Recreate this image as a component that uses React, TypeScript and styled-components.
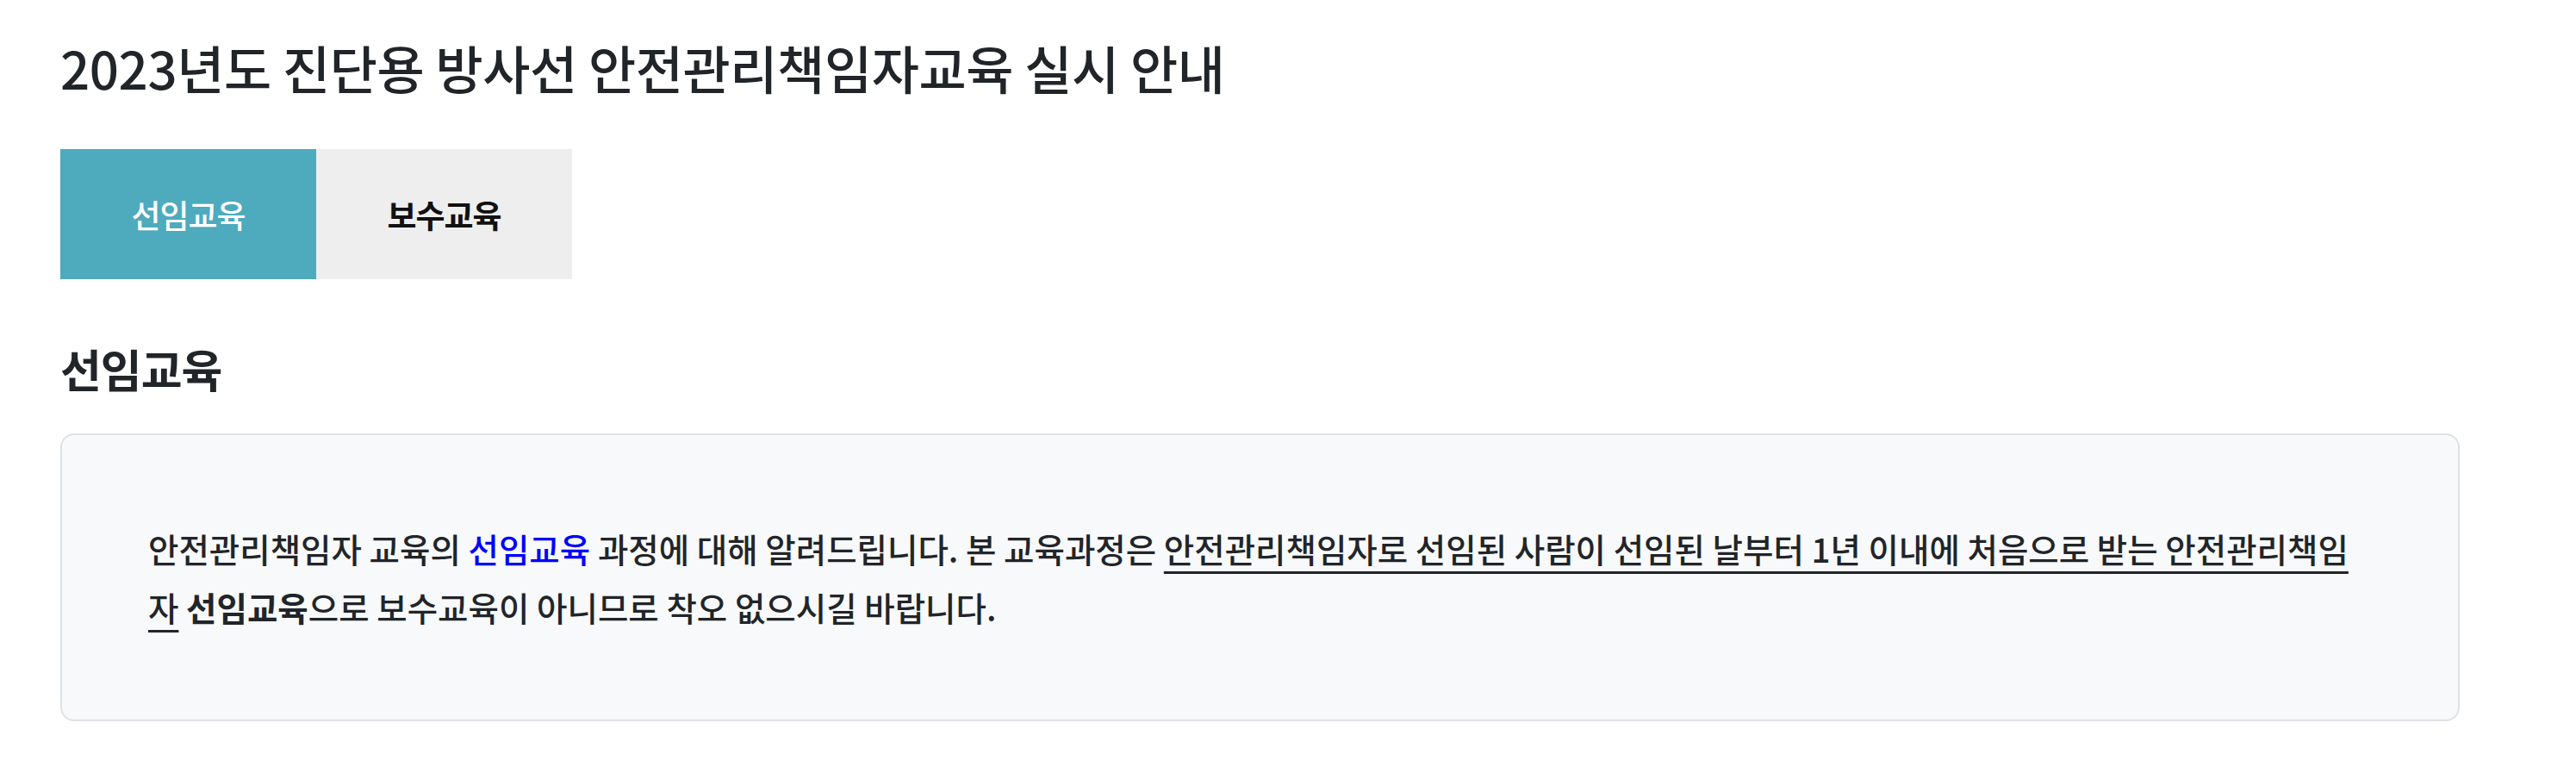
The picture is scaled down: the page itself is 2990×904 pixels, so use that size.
import React from 'react'
import styled, { createGlobalStyle } from 'styled-components'

const GlobalStyle = createGlobalStyle`
  html, body {
    margin: 0;
    padding: 0;
    background: #ffffff;
  }
  body {
    font-family: "Noto Sans CJK KR", "Noto Sans", sans-serif;
    color: #212529;
  }
`

const tabs = [
  { id: 'new', label: '선임교육' },
  { id: 'refresh', label: '보수교육' },
]

const App = () => {
  const active = 'new'
  return (
    <>
      <GlobalStyle />
      <Page>
        <Title>2023년도 진단용 방사선 안전관리책임자교육 실시 안내</Title>
        <TabBar>
          {tabs.map((t) => (
            <Tab key={t.id} $active={t.id === active}>
              {t.label}
            </Tab>
          ))}
        </TabBar>
        <SectionTitle>선임교육</SectionTitle>
        <InfoBox>
          <Text>
            안전관리책임자 교육의 <Blue>선임교육</Blue> 과정에 대해 알려드립니다. 본 교육과정은{' '}
            <Under>안전관리책임자로 선임된 사람이 선임된 날부터 1년 이내에 처음으로 받는 안전관리책임자</Under>{' '}
            <b>선임교육</b>으로 보수교육이 아니므로 착오 없으시길 바랍니다.
          </Text>
        </InfoBox>
      </Page>
    </>
  )
}

export default App

const Page = styled.div`
  width: 2785px;
  padding: 36px 0 60px 70px;
`

const Title = styled.h1`
  margin: 0;
  font-size: 60px;
  font-weight: 500;
  line-height: 84px;
  letter-spacing: -0.4px;
  color: #212529;
`

const TabBar = styled.div`
  display: flex;
  margin-top: 53px;
`

const Tab = styled.div<{ $active?: boolean }>`
  width: 297px;
  height: 151px;
  display: flex;
  align-items: center;
  justify-content: center;
  font-size: 37px;
  font-weight: ${(p) => (p.$active ? 500 : 600)};
  letter-spacing: -1px;
  background-color: ${(p) => (p.$active ? '#4eaabd' : '#eeeeee')};
  color: ${(p) => (p.$active ? '#ffffff' : '#111111')};
`

const SectionTitle = styled.h2`
  margin: 72px 0 0;
  font-size: 52px;
  font-weight: 700;
  line-height: 64px;
  letter-spacing: -1px;
  color: #212529;
`

const InfoBox = styled.div`
  margin-top: 43px;
  border: 2px solid #dee2e6;
  border-radius: 16px;
  background-color: #f8f9fa;
  padding: 97px 100px;
`

const Text = styled.p`
  margin: 0;
  font-size: 38.5px;
  font-weight: 500;
  line-height: 68px;
  color: #212529;

  b {
    font-weight: 700;
  }
`

const Blue = styled.span`
  color: #0000ff;
`

const Under = styled.span`
  text-decoration: underline;
  text-decoration-thickness: 3px;
  text-underline-offset: 10px;
`
